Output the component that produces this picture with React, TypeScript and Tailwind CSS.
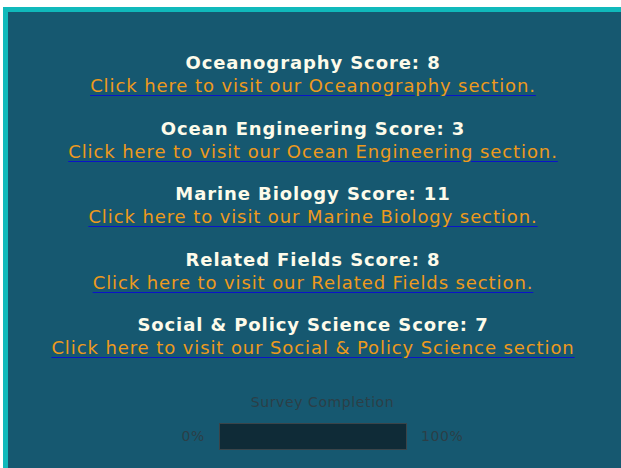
const scores = [
  { field: "Oceanography", score: 8, link: "Click here to visit our Oceanography section." },
  { field: "Ocean Engineering", score: 3, link: "Click here to visit our Ocean Engineering section." },
  { field: "Marine Biology", score: 11, link: "Click here to visit our Marine Biology section." },
  { field: "Related Fields", score: 8, link: "Click here to visit our Related Fields section." },
  { field: "Social & Policy Science", score: 7, link: "Click here to visit our Social & Policy Science section" },
];

export default function App() {
  return (
    <div
      className="h-[468px] w-[621px] overflow-hidden bg-white pl-[3px] pt-[7px]"
      style={{ fontFamily: '"DejaVu Sans", Verdana, sans-serif' }}
    >
      <div className="h-[600px] w-[630px] border-l-[5px] border-t-[5px] border-[#10b9bb] bg-[#165870]">
        <div className="flex w-[610px] flex-col items-center pt-[39px] text-center">
          {scores.map((s) => (
            <div key={s.field} className="mb-[19.5px] flex flex-col items-center">
              <div className="text-[18px] font-bold leading-[23px] tracking-[0.9px] text-[#fdfbea]">
                {s.field} Score: {s.score}
              </div>
              <a
                href="#"
                className="text-[18px] leading-[23px] tracking-[0.9px] text-[#ee9a1c] underline decoration-[#0a14c8] underline-offset-[3px]"
              >
                {s.link}
              </a>
            </div>
          ))}
          {/* completion meter */}
          <div className="flex flex-col items-center pl-[19px]">
            <div className="mt-[14px] text-[14px] leading-[18px] tracking-[0.6px] text-[#2b3f47]">Survey Completion</div>
            <div className="mt-[12px] flex items-center gap-[14px] text-[14px] tracking-[0.6px] text-[#2b3f47]">
              <span>0%</span>
              <div className="h-[27px] w-[188px] border border-[#3a4449] bg-[#0f2b37]" />
              <span>100%</span>
            </div>
          </div>
        </div>
      </div>
    </div>
  );
}
